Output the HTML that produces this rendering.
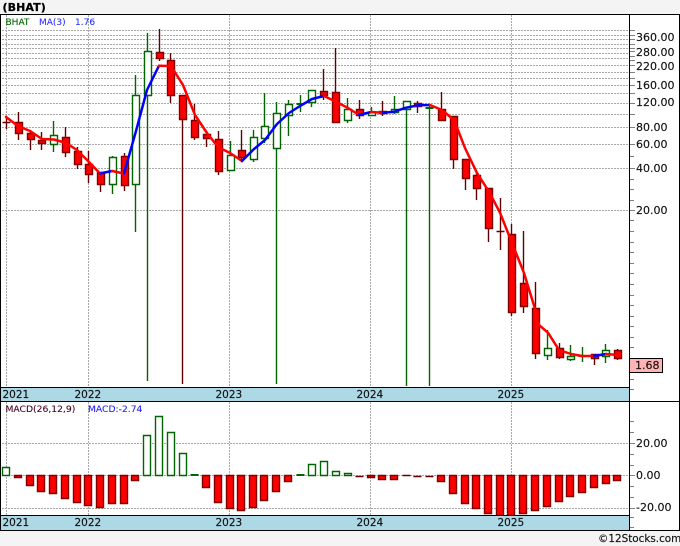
<!DOCTYPE html>
<html><head><meta charset="utf-8"><title>BHAT</title>
<style>
html,body{margin:0;padding:0;background:#f4f4f4;width:680px;height:546px;overflow:hidden}
svg{display:block}
text{font-family:"DejaVu Sans","Liberation Sans",sans-serif;font-size:11px;fill:#111;stroke:#111;stroke-width:.15px}
.y{font-size:10.5px}
.s{font-size:9px;stroke-width:.1px}
</style></head><body>
<svg width="680" height="546" viewBox="0 0 680 546" xmlns="http://www.w3.org/2000/svg">
<rect width="680" height="546" fill="#f4f4f4"/>
<rect x="0" y="14" width="680" height="516" fill="#fff"/>
<text x="2.5" y="11" style="font-weight:bold;font-size:11px;letter-spacing:.1px;fill:#000;stroke:#000;stroke-width:.25px">(BHAT)</text>
<g fill="none" stroke="#a8a8a8" stroke-width="1" stroke-dasharray="2 1" shape-rendering="crispEdges">
<path d="M2 30.5H629M2 35.5H629M2 39.5H629M2 44.5H629M2 48.5H629M2 53.5H629M2 58.5H629M2 65.5H629M2 72.5H629M2 78.5H629M2 85.5H629M2 93.5H629M2 103.5H629M2 114.5H629M2 127.5H629M2 144.5H629M2 168.5H629M2 210.5H629"/>
<path d="M2 443.5H629M2 475.5H629M2 508.5H629"/>
<path d="M6.5 15V387M88.5 15V387M229.5 15V387M370.5 15V387M511.5 15V387M6.5 402V515M88.5 402V515M229.5 402V515M370.5 402V515M511.5 402V515"/>
</g>
<g stroke-width="1.4">
<path fill="none" stroke="#006400" d="M53.5 121V152M112.5 156V194M135.5 75V232M147.5 33V381M230.5 141V171M253.5 130V162M264.5 93V143M276.5 102V384M288.5 100V136M300.5 95V112M311.5 90V107M347.5 98V123M371.5 107V115M394.5 96V114M406.5 101V386M429.5 105V386M547.5 330V360M570.5 345V361M582.5 347V362M605.5 344V363"/>
<path fill="none" stroke="#600000" d="M6.5 116V129M18.5 112V140M30.5 130V150M41.5 132V150M65.5 127V157M77.5 147V169M88.5 151V183M100.5 172V192M124.5 153V191M159.5 29V61M170.5 53V103M182.5 96V384M194.5 104V140M206.5 134V147M218.5 131V175M241.5 130V161M323.5 69V100M335.5 48V122M359.5 100V119M382.5 101V116M417.5 101V113M441.5 92V120M453.5 116V169M465.5 159V190M476.5 172V200M488.5 188V242M500.5 198V250M511.5 224V316M523.5 231V313M535.5 282V359M559.5 343V359M594.5 354V365M617.5 349V360"/>
<g transform="translate(-.5 0)">
<path fill="#fff" stroke="#006400" d="M51 135.5h7v9h-7zM110 157.5h7v27h-7zM133 95.5h7v89h-7zM145 51.5h7v44h-7zM228 155.5h7v15h-7zM251 137.5h7v22h-7zM262 126.5h7v12h-7zM274 113.5h7v35h-7zM286 104.5h7v11h-7zM309 90.5h7v12h-7zM345 109.5h7v11h-7zM369 112.5h7v3h-7zM392 109.5h7v3h-7zM404 101.5h7v8h-7zM545 348.5h7v7h-7zM568 356.5h7v3h-7zM603 350.5h7v6h-7z"/>
<path fill="none" stroke="#006400" stroke-width="2" d="M297 104h8M426 108h8M579 356h8"/>
<path fill="#ff0000" stroke="#800000" d="M16 122.5h7v11h-7zM28 133.5h7v6h-7zM39 140.5h7v3h-7zM63 137.5h7v15h-7zM75 151.5h7v13h-7zM86 164.5h7v10h-7zM98 172.5h7v12h-7zM122 156.5h7v29h-7zM157 52.5h7v6h-7zM168 60.5h7v35h-7zM180 95.5h7v24h-7zM192 120.5h7v17h-7zM204 134.5h7v4h-7zM216 139.5h7v32h-7zM239 150.5h7v7h-7zM321 91.5h7v4h-7zM333 92.5h7v30h-7zM357 109.5h7v6h-7zM380 111.5h7v2h-7zM415 103.5h7v3h-7zM439 109.5h7v11h-7zM451 116.5h7v43h-7zM463 159.5h7v19h-7zM474 175.5h7v13h-7zM486 188.5h7v40h-7zM509 234.5h7v78h-7zM521 283.5h7v23h-7zM533 308.5h7v45h-7zM557 348.5h7v9h-7zM592 354.5h7v4h-7zM615 350.5h7v8h-7z"/>
<path fill="none" stroke="#600000" d="M3 122.5h8M497 231.5h8"/>
</g>
</g>
<g fill="none" stroke-width="2.5" stroke-linejoin="round" stroke-linecap="round">
<polyline stroke="#ff0000" points="6,117 18,126 30,131 42,139 54,139.5 66,143 77,150 89,162 100,173.5"/>
<polyline stroke="#0000ff" points="100,173.5 112,171"/>
<polyline stroke="#ff0000" points="112,171 124,173.5"/>
<polyline stroke="#0000ff" points="124,173.5 136,131 147,90 159,65.7"/>
<polyline stroke="#ff0000" points="159,65.7 171,66 183,85 195,115 207,133 218,147 230,153 242,161"/>
<polyline stroke="#0000ff" points="242,161 254,149 265,140 277,124 289,113 300,106 312,99 324,96"/>
<polyline stroke="#ff0000" points="324,96 336,101.7 348,108 359,115"/>
<polyline stroke="#0000ff" points="359,115 371,112"/>
<polyline stroke="#ff0000" points="371,112 383,112.7"/>
<polyline stroke="#0000ff" points="383,112.7 394,111.7 406,107.7 418,105.3 430,105"/>
<polyline stroke="#ff0000" points="430,105 442,110 454,120 465,148 477,173 489,191.7 500,212.7 512,243 524,273 536,312 539,325 548,332.7 559,350 571,354 582,356 594,356"/>
<polyline stroke="#0000ff" points="594,356 606,354"/>
<polyline stroke="#ff0000" points="606,354 618,355"/>
</g>
<g stroke-width="1.4" transform="translate(-.5 0)">
<path fill="#fff" stroke="#006400" d="M3 467.5h7v8h-7zM144 435.5h7v40h-7zM156 416.5h7v59h-7zM168 432.5h7v43h-7zM180 453.5h7v22h-7zM309 464.5h7v11h-7zM321 461.5h7v14h-7zM333 471.5h7v4h-7zM345 473.5h7v2h-7z"/>
<path fill="none" stroke="#006400" stroke-width="2" d="M191 475h8M297 475h8"/>
<path fill="#ff0000" stroke="#800000" d="M15 475.5h7v2h-7zM27 475.5h7v10h-7zM38 475.5h7v16h-7zM50 475.5h7v18h-7zM62 475.5h7v23h-7zM74 475.5h7v27h-7zM85 475.5h7v30h-7zM97 475.5h7v32h-7zM109 475.5h7v28h-7zM121 475.5h7v28h-7zM132 475.5h7v5h-7zM203 475.5h7v12h-7zM215 475.5h7v27h-7zM227 475.5h7v33h-7zM238 475.5h7v35h-7zM250 475.5h7v32h-7zM261 475.5h7v25h-7zM273 475.5h7v16h-7zM285 475.5h7v6h-7zM368 475.5h7v2h-7zM379 475.5h7v4h-7zM391 475.5h7v4h-7zM438 475.5h7v6h-7zM450 475.5h7v18h-7zM462 475.5h7v28h-7zM473 475.5h7v33h-7zM485 475.5h7v38h-7zM497 475.5h7v40h-7zM508 475.5h7v40h-7zM520 475.5h7v38h-7zM532 475.5h7v35h-7zM544 475.5h7v31h-7zM556 475.5h7v26h-7zM567 475.5h7v21h-7zM579 475.5h7v17h-7zM591 475.5h7v12h-7zM603 475.5h7v8h-7zM614 475.5h7v5h-7z"/>
<path fill="none" stroke="#600000" d="M356 476.5h8M403 475.5h8M414 476.5h8M426 476.5h8"/>
</g>
<g shape-rendering="crispEdges">
<rect x="0" y="387" width="629" height="14" fill="#add8e6"/>
<rect x="0" y="515" width="629" height="15" fill="#add8e6"/>
<path fill="none" stroke="#000" d="M0 14.5H680M0.5 14V530M629.5 14V530M0 387.5H629M0 401.5H680M0 515.5H629M0 530.5H680M679.5 14V530"/>
<path fill="none" stroke="#808080" d="M630 30.5h5M630 35.5h5M630 39.5h5M630 44.5h5M630 48.5h5M630 51.5h5M630 56.5h5M630 60.5h5M630 65.5h5M630 72.5h5M630 78.5h5M630 85.5h5M630 93.5h5M630 103.5h5M630 114.5h5M630 127.5h5M630 144.5h5M630 156.5h4M630 168.5h5M630 179.5h4M630 189.5h4M630 200.5h4M630 210.5h5M630 220.5h4M630 231.5h4M630 242.5h4M630 252.5h4M630 263.5h4M630 273.5h4M630 284.5h4M630 295.5h4M630 305.5h4M630 316.5h4M630 326.5h4M630 337.5h4M630 347.5h4M630 358.5h4M630 369.5h4M630 379.5h4M630 389.5h4M630 421.5h4M630 432.5h4M630 443.5h5M630 454.5h4M630 465.5h4M630 475.5h5M630 486.5h4M630 497.5h4M630 508.5h5M630 517.5h4M630 527.5h4"/>
<rect x="629.5" y="358.5" width="33" height="14" fill="#ffb3b3" stroke="#000"/>
</g>
<text x="5.5" y="25" class="s" style="fill:#006400;stroke:#006400">BHAT</text>
<text x="39" y="25" class="s" style="fill:#3030ff;stroke:#3030ff">MA(3)</text>
<text x="75" y="25" class="s" style="fill:#2030ff;stroke:#2030ff">1.76</text>
<text x="5.5" y="412" class="s" style="font-size:9.2px;fill:#400020;stroke:#400020">MACD(26,12,9)</text>
<text x="88" y="412" class="s" style="font-size:9.2px;fill:#2a20ff;stroke:#2a20ff">MACD:-2.74</text>
<text x="2.5" y="398" class="y">2021</text><text x="74.5" y="398" class="y">2022</text><text x="215.5" y="398" class="y">2023</text><text x="356.5" y="398" class="y">2024</text><text x="497.5" y="398" class="y">2025</text>
<text x="2.5" y="526" class="y">2021</text><text x="74.5" y="526" class="y">2022</text><text x="215.5" y="526" class="y">2023</text><text x="356.5" y="526" class="y">2024</text><text x="497.5" y="526" class="y">2025</text>
<text x="636" y="41">360.00</text><text x="636" y="56">280.00</text><text x="636" y="70">220.00</text><text x="636" y="89">160.00</text><text x="636" y="106">120.00</text><text x="636" y="131">80.00</text><text x="636" y="148">60.00</text><text x="636" y="172">40.00</text><text x="636" y="214">20.00</text>
<text x="635" y="369">1.68</text>
<text x="636" y="447">20.00</text><text x="636" y="479">0.00</text><text x="636" y="511">-20.00</text>
<text x="598" y="542" style="font-size:10.4px">©12Stocks.com</text>
</svg>
</body></html>
